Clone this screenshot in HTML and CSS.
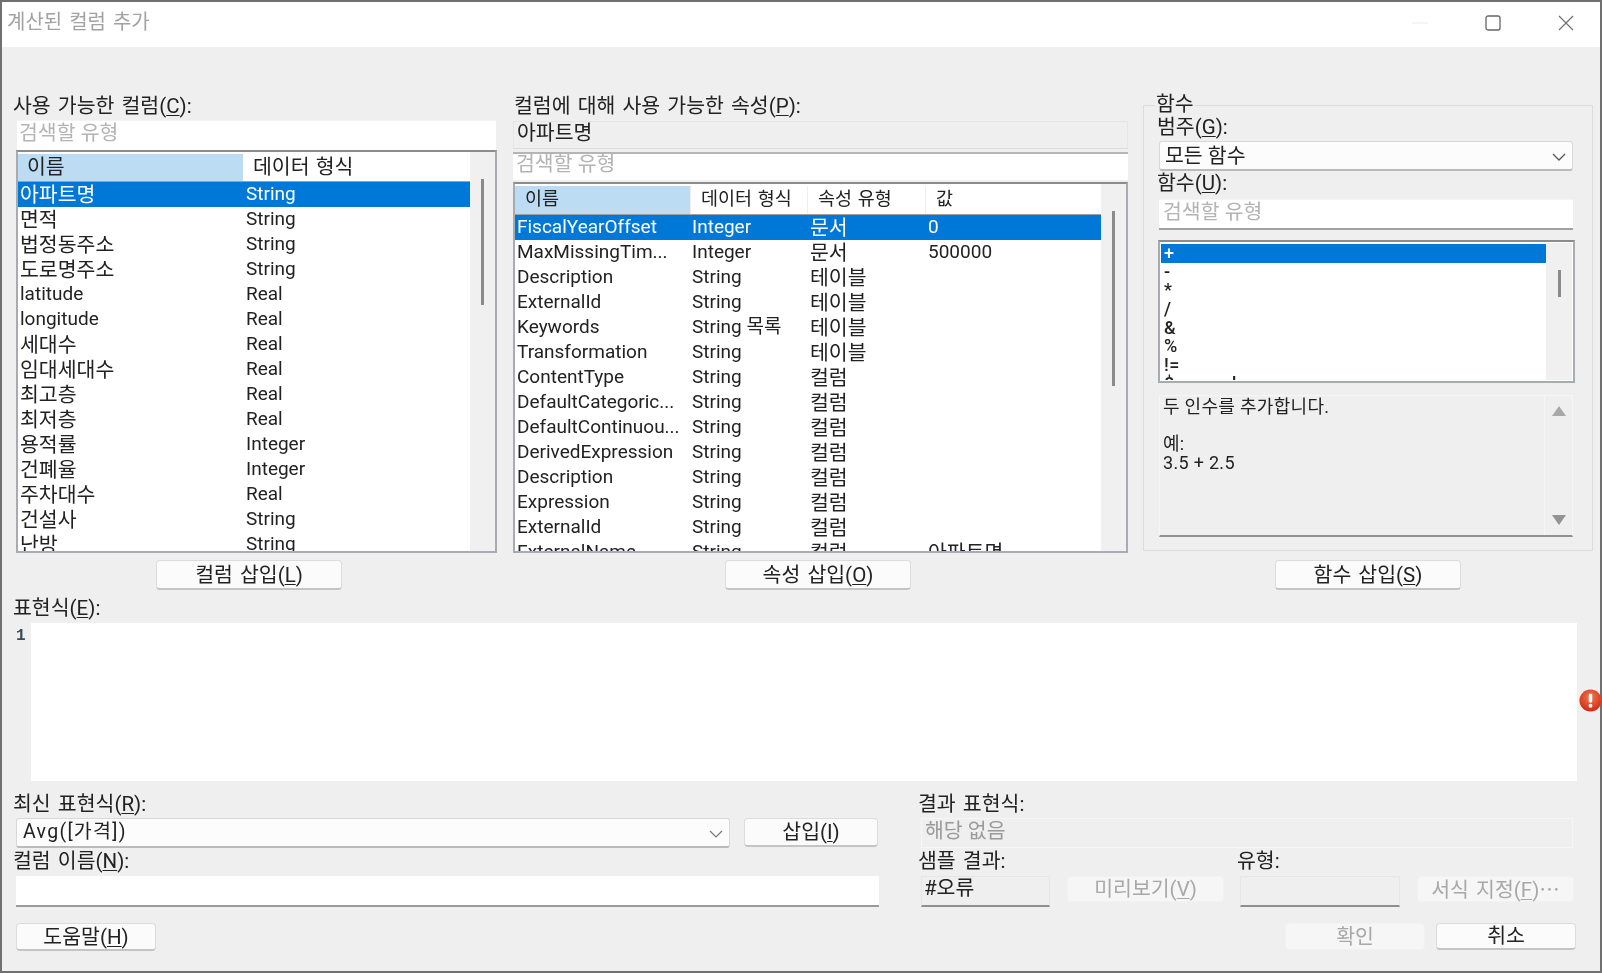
FILE: index.html
```html
<!DOCTYPE html>
<html lang="ko">
<head>
<meta charset="utf-8">
<title>계산된 컬럼 추가</title>
<link rel="stylesheet" href="styles.css">
</head>
<body>
<div class="window">
  <header class="titlebar">
    <span class="title">계산된 컬럼 추가</span>
    <div class="controls">
      <svg class="ctl" viewBox="0 0 16 16"><path d="M0 8H16" stroke="#eeeeee" stroke-width="1.2" fill="none"/></svg>
      <svg class="ctl" viewBox="0 0 16 16"><rect x="1" y="1" width="14" height="14" rx="2" stroke="#666" stroke-width="1.3" fill="none"/></svg>
      <svg class="ctl" viewBox="0 0 16 16"><path d="M1 1L15 15M15 1L1 15" stroke="#707070" stroke-width="1.2" fill="none"/></svg>
    </div>
  </header>

  <main class="content">
    <div class="panels">
      <section class="col col-a">
        <div class="label label-a">사용 가능한 컬럼(<u>C</u>):</div>
        <div class="field search search-a">검색할 유형</div>
        <div class="list list-a">
          <div class="list-main">
            <div class="head head-a"><span class="hcell on">이름</span><span class="hcell">데이터 형식</span></div>
            <div class="row row-a sel"><span class="ko">아파트명</span><span>String</span></div>
            <div class="row row-a"><span class="ko">면적</span><span>String</span></div>
            <div class="row row-a"><span class="ko">법정동주소</span><span>String</span></div>
            <div class="row row-a"><span class="ko">도로명주소</span><span>String</span></div>
            <div class="row row-a"><span>latitude</span><span>Real</span></div>
            <div class="row row-a"><span>longitude</span><span>Real</span></div>
            <div class="row row-a"><span class="ko">세대수</span><span>Real</span></div>
            <div class="row row-a"><span class="ko">임대세대수</span><span>Real</span></div>
            <div class="row row-a"><span class="ko">최고층</span><span>Real</span></div>
            <div class="row row-a"><span class="ko">최저층</span><span>Real</span></div>
            <div class="row row-a"><span class="ko">용적률</span><span>Integer</span></div>
            <div class="row row-a"><span class="ko">건폐율</span><span>Integer</span></div>
            <div class="row row-a"><span class="ko">주차대수</span><span>Real</span></div>
            <div class="row row-a"><span class="ko">건설사</span><span>String</span></div>
            <div class="row row-a"><span class="ko">난방</span><span>String</span></div>
          </div>
          <div class="vscroll"><div class="thumb thumb-a"></div></div>
        </div>
        <button class="btn btn-insert btn-a">컬럼 삽입(<u>L</u>)</button>
      </section>

      <section class="col col-b">
        <div class="label label-b">컬럼에 대해 사용 가능한 속성(<u>P</u>):</div>
        <div class="field readonly">아파트명</div>
        <div class="field search search-b">검색할 유형</div>
        <div class="list list-b">
          <div class="list-main">
            <div class="head head-b"><span class="hcell on">이름</span><span class="hcell">데이터 형식</span><span class="hcell">속성 유형</span><span class="hcell">값</span></div>
            <div class="row row-b sel"><span>FiscalYearOffset</span><span>Integer</span><span class="ko">문서</span><span>0</span></div>
            <div class="row row-b"><span>MaxMissingTim...</span><span>Integer</span><span class="ko">문서</span><span>500000</span></div>
            <div class="row row-b"><span>Description</span><span>String</span><span class="ko">테이블</span><span></span></div>
            <div class="row row-b"><span>ExternalId</span><span>String</span><span class="ko">테이블</span><span></span></div>
            <div class="row row-b"><span>Keywords</span><span>String 목록</span><span class="ko">테이블</span><span></span></div>
            <div class="row row-b"><span>Transformation</span><span>String</span><span class="ko">테이블</span><span></span></div>
            <div class="row row-b"><span>ContentType</span><span>String</span><span class="ko">컬럼</span><span></span></div>
            <div class="row row-b"><span>DefaultCategoric...</span><span>String</span><span class="ko">컬럼</span><span></span></div>
            <div class="row row-b"><span>DefaultContinuou...</span><span>String</span><span class="ko">컬럼</span><span></span></div>
            <div class="row row-b"><span>DerivedExpression</span><span>String</span><span class="ko">컬럼</span><span></span></div>
            <div class="row row-b"><span>Description</span><span>String</span><span class="ko">컬럼</span><span></span></div>
            <div class="row row-b"><span>Expression</span><span>String</span><span class="ko">컬럼</span><span></span></div>
            <div class="row row-b"><span>ExternalId</span><span>String</span><span class="ko">컬럼</span><span></span></div>
            <div class="row row-b"><span>ExternalName</span><span>String</span><span class="ko">컬럼</span><span class="ko">아파트명</span></div>
          </div>
          <div class="vscroll"><div class="thumb thumb-b"></div></div>
        </div>
        <button class="btn btn-insert btn-b">속성 삽입(<u>O</u>)</button>
      </section>

      <section class="col col-c">
        <div class="group">
          <span class="legend">함수</span>
          <div class="label label-g">범주(<u>G</u>):</div>
          <div class="field combo combo-g">모든 함수
            <svg class="chev" viewBox="0 0 14 8"><path d="M1 1L7 7L13 1" stroke="#555" stroke-width="1.3" fill="none"/></svg>
          </div>
          <div class="label label-u">함수(<u>U</u>):</div>
          <div class="field search search-c">검색할 유형</div>
          <div class="list list-c">
            <div class="list-main">
              <div class="frow sel">+</div>
              <div class="frow">-</div>
              <div class="frow">*</div>
              <div class="frow">/</div>
              <div class="frow">&amp;</div>
              <div class="frow">%</div>
              <div class="frow">!=</div>
              <div class="frow">$csearch</div>
            </div>
            <div class="vscroll"><div class="thumb thumb-c"></div></div>
          </div>
          <div class="desc">
            <div class="desc-text">두 인수를 추가합니다.<br><br>예:<br>3.5 + 2.5</div>
            <div class="desc-scroll">
              <svg class="arrow" viewBox="0 0 14 10"><path d="M7 0L14 10H0Z" fill="#a8a8a8"/></svg>
              <svg class="arrow" viewBox="0 0 14 10"><path d="M0 0H14L7 10Z" fill="#939393"/></svg>
            </div>
          </div>
        </div>
        <button class="btn btn-insert btn-c">함수 삽입(<u>S</u>)</button>
      </section>
    </div>

    <div class="label label-e">표현식(<u>E</u>):</div>
    <div class="editor-row">
      <div class="gutter">1</div>
      <div class="editor"></div>
      <svg class="err" viewBox="0 0 24 24">
        <defs><radialGradient id="rg" cx="50%" cy="35%" r="65%"><stop offset="0" stop-color="#f47a55"/><stop offset="1" stop-color="#cf2a10"/></radialGradient></defs>
        <circle cx="12" cy="12" r="11.5" fill="url(#rg)"/>
        <rect x="10.2" y="5" width="3.6" height="9" rx="1" fill="#fff"/>
        <circle cx="12" cy="17.5" r="2" fill="#fff"/>
      </svg>
    </div>

    <div class="bottom">
      <div class="left">
        <div class="label label-r">최신 표현식(<u>R</u>):</div>
        <div class="recent-row">
          <div class="field combo combo-r">Avg([가격])
            <svg class="chev" viewBox="0 0 14 8"><path d="M1 1L7 7L13 1" stroke="#777" stroke-width="1.2" fill="none"/></svg>
          </div>
          <button class="btn btn-small">삽입(<u>I</u>)</button>
        </div>
        <div class="label label-n">컬럼 이름(<u>N</u>):</div>
        <div class="field name-input"></div>
        <button class="btn btn-help">도움말(<u>H</u>)</button>
      </div>
      <div class="right">
        <div class="label label-r">결과 표현식:</div>
        <div class="field result">해당 없음</div>
        <div class="label label-n two-labels"><span class="lab-sample">샘플 결과:</span><span>유형:</span></div>
        <div class="result-row">
          <div class="field out out-a">#오류</div>
          <button class="btn btn-off btn-wide">미리보기(<u>V</u>)</button>
          <div class="field out out-b"></div>
          <button class="btn btn-off btn-wide">서식 지정(<u>F</u>)<span class="ell">…</span></button>
        </div>
        <div class="actions">
          <button class="btn btn-off btn-act">확인</button>
          <button class="btn btn-act">취소</button>
        </div>
      </div>
    </div>
  </main>
</div>
</body>
</html>
```

FILE: styles.css
```css
* { box-sizing: border-box; }
html, body { margin: 0; padding: 0; }
body {
  width: 1602px;
  height: 973px;
  overflow: hidden;
  background: #efefef;
  font-family: Roboto, "Noto Sans CJK KR", sans-serif;
  font-size: 20.5px;
  color: #222;
}
u { text-underline-offset: 2px; text-decoration-thickness: 1px; }

.window {
  width: 1602px;
  height: 973px;
  border: 2px solid #707070;
  background: #efefef;
  display: flex;
  flex-direction: column;
  filter: blur(0.35px);
}
.titlebar {
  height: 45px;
  flex: none;
  background: #fff;
  display: flex;
  align-items: center;
  justify-content: space-between;
  padding: 0 26px 8px 5px;
}
.title { color: #a2a2a2; font-size: 20px; word-spacing: 2px; }
.controls { display: flex; gap: 57px; align-items: center; padding-top: 5px; }
.ctl { width: 16px; height: 16px; display: block; }

.content { flex: 1; display: flex; flex-direction: column; padding: 45px 0 0 14px; }
.panels { display: grid; grid-template-columns: 481px 615px 449px; column-gap: 16px; }
.panels .col-c { margin-left: -1px; }
.col { display: flex; flex-direction: column; height: 498px; }

.label { margin-left: -3px; white-space: nowrap; line-height: 24px; word-spacing: 2px; }
.label-a { height: 28px; padding-top: 2px; }
.label-b { height: 29px; padding-top: 2px; margin-left: 1px; }

.field { background: #fff; white-space: nowrap; }
.search { color: #b4b4b4; border-top: 1px solid #f4f4f4; }
.search-a { height: 30px; margin-left: 1px; margin-right: 1px; padding: 0 0 0 2px; line-height: 24px; }
.readonly { height: 28px; background: #efefef; border: 1px solid #e6e6e6; padding-left: 3px; line-height: 22px; border-bottom: 1px solid #dcdcdc; }
.search-b { height: 28px; margin-top: 3px; padding-left: 3px; line-height: 20px; border-top: 2px solid #b5b5b5; }

.list {
  display: flex;
  background: #fff;
  border: 2px solid #a8abb0;
  border-top-color: #8c8c8c;
  overflow: hidden;
}
.list-a { height: 403px; }
.list-b { height: 371px; margin-top: 2px; }
.list-main { flex: 1; min-width: 0; overflow: hidden; }
.vscroll { flex: none; width: 25px; background: #f0f0f0; position: relative; }
.thumb { width: 3px; background: #8a8a8a; margin: 0 auto; }
.thumb-a { height: 126px; margin-top: 27px; }
.thumb-b { height: 175px; margin-top: 27px; }
.thumb-c { height: 27px; margin-top: 27px; }

.head { display: grid; background: #fff; border-bottom: 1px solid #a0a0a0; margin-top: 2px; }
.head-a { grid-template-columns: 225px 1fr; height: 28px; }
.head-b { grid-template-columns: 175px 117px 118px 1fr; height: 29px; font-size: 18.5px; }
.hcell { padding-left: 10px; line-height: 26px; border-left: 1px solid #eee; word-spacing: 1px; }
.head-a .hcell { padding-left: 9px; border: 0; line-height: 27px; }
.head-a .hcell + .hcell { padding-left: 10px; }
.hcell.on { background: #bcdcf4; border: 0; }

.row { display: grid; height: 25px; line-height: 24px; white-space: nowrap; font-size: 19px; }
.row span { overflow: hidden; }
.row .ko { font-size: 20.5px; padding-top: 1px; }
.row-a { grid-template-columns: 226px 1fr; padding-left: 2px; }
.row-b { grid-template-columns: 175px 118px 118px 1fr; padding-left: 2px; }
.row.sel, .frow.sel { background: #0078d7; color: #fff; }

.btn {
  display: block;
  font: inherit;
  color: #222;
  background: #fbfbfb;
  border: 1px solid #dcdcdc;
  border-bottom: 2px solid #c4c4c4;
  border-radius: 4px;
  padding: 0;
  line-height: 24px;
  white-space: nowrap;
}
.btn-insert { width: 186px; height: 30px; word-spacing: 2px; }
.btn-a { margin-top: 7px; margin-left: 140px; }
.btn-b { margin-top: 7px; margin-left: 212px; }
.btn-c { margin-top: 9px; margin-left: 132px; }

.group {
  position: relative;
  height: 446px;
  margin-top: 13px;
  border: 1px solid #dcdcdc;
  padding: 9px 19px 0 15px;
}
.legend { position: absolute; left: 11px; top: -14px; background: #efefef; padding: 0 1px; line-height: 24px; }
.label-g { height: 26px; margin-left: -2px; }
.label-u { height: 28px; margin-left: -2px; }
.combo { position: relative; border: 1px solid #d8d8d8; border-bottom: 2px solid #bbb; border-radius: 3px; background: #fcfcfc; }
.combo-g { height: 30px; padding-left: 5px; line-height: 29px; }
.chev { position: absolute; width: 14px; height: 8px; right: 6px; top: 11px; }
.search-c { height: 31px; border-bottom: 2px solid #a0a0a0; padding-left: 4px; line-height: 24px; }

.list-c { height: 143px; margin: 10px -2px 0 -1px; padding: 1px; }
.list-c .vscroll { width: 26px; }
.frow { height: 18.7px; line-height: 18px; padding-left: 3px; font-size: 18px; font-weight: 500; white-space: nowrap; letter-spacing: 0.6px; }
.list-c .list-main { padding-top: 1px; }

.desc { display: flex; height: 142px; margin-top: 12px; border: 1px solid #f6f6f6; border-bottom: 2px solid #909090; }
.desc-text { flex: 1; padding: 2px 0 0 3px; line-height: 18.5px; font-size: 18px; letter-spacing: 0.3px; }
.desc-scroll { width: 28px; flex: none; border-left: 1px solid #f6f6f6; display: flex; flex-direction: column; justify-content: space-between; align-items: center; padding: 10px 0 10px; }
.arrow { width: 14px; height: 10px; display: block; }

.label-e { height: 32px; line-height: 24px; padding-top: 5px; margin-top: 1px; flex: none; }
.editor-row { display: flex; height: 158px; position: relative; margin-left: -14px; flex: none; }
.gutter { width: 29px; font-family: "Liberation Mono", monospace; font-size: 16px; font-weight: 700; padding: 4px 0 0 14px; color: #3a4a5a; }
.editor { width: 1546px; background: #fff; }
.err { position: absolute; right: -2px; top: 66px; width: 23px; height: 23px; }

.bottom { display: flex; flex: 1; }
.left { width: 863px; flex: none; }
.right { width: 655px; flex: none; margin-left: 42px; }
.label-r { height: 37px; padding-top: 11px; }
.label-n { height: 28px; padding-top: 1px; }

.recent-row { display: flex; gap: 14px; height: 30px; align-items: flex-start; }
.combo-r { width: 714px; height: 30px; padding-left: 6px; line-height: 26px; font-size: 19.5px; letter-spacing: 1.3px; }
.btn-small { width: 134px; height: 29px; }
.name-input { height: 31px; border-bottom: 2px solid #9a9a9a; }
.btn-help { width: 140px; height: 28px; margin-top: 16px; }

.right .label { margin-left: -3px; }
.result { height: 30px; width: 652px; background: #efefef; border: 1px solid #f6f6f6; color: #9a9a9a; padding-left: 3px; line-height: 24px; }
.two-labels { display: flex; }
.lab-sample { width: 319px; }
.result-row { display: flex; height: 31px; align-items: flex-start; }
.out { height: 31px; background: #efefef; border: 1px solid #e6e6e6; border-bottom: 2px solid #8e8e8e; padding-left: 2px; line-height: 22px; }
.out-a { width: 129px; margin-right: 17px; }
.out-b { width: 160px; margin: 0 17px 0 16px; }
.btn-off { background: #f6f6f6; border: 1px solid #f2f2f2; color: #a8a8a8; }
.btn-wide { width: 157px; height: 26px; line-height: 22px; word-spacing: 2px; }
.ell { font-family: "Noto Sans CJK KR", sans-serif; }
.actions { display: flex; justify-content: flex-end; gap: 11px; width: 655px; margin-top: 16px; }
.btn-act { width: 140px; height: 27px; line-height: 22px; }
```
